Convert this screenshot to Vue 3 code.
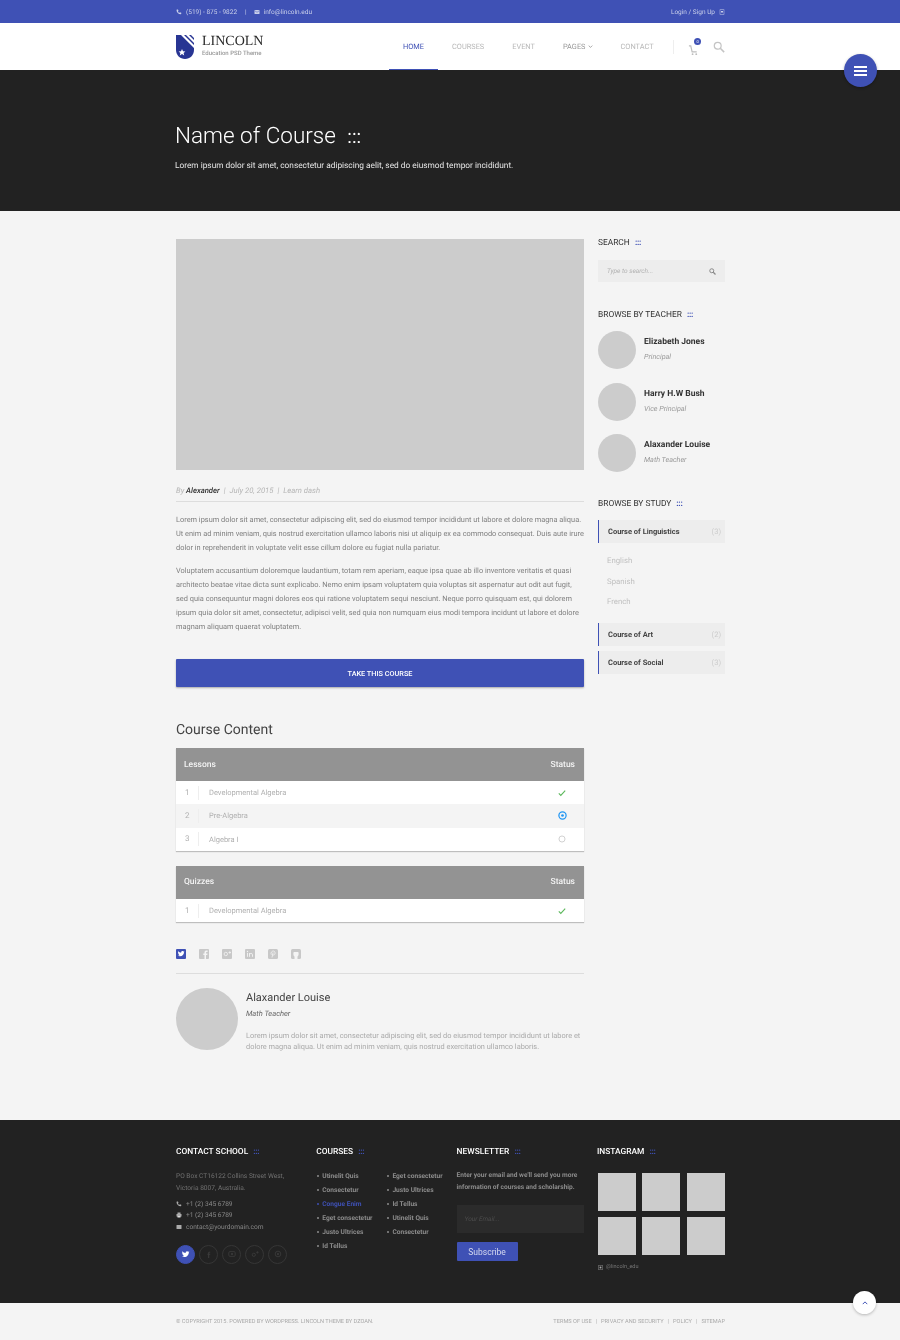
<script setup>
const teachers = [
  { name: 'Elizabeth Jones', role: 'Principal' },
  { name: 'Harry H.W Bush', role: 'Vice Principal' },
  { name: 'Alaxander Louise', role: 'Math Teacher' },
]
const linksA = ['Utinelit Quis', 'Consectetur', 'Congue Enim', 'Eget consectetur', 'Justo Ultrices', 'Id Tellus']
const linksB = ['Eget consectetur', 'Justo Ultrices', 'Id Tellus', 'Utinelit Quis', 'Consectetur']
const lessons = [
  { n: 1, title: 'Developmental Algebra', status: 'done' },
  { n: 2, title: 'Pre-Algebra', status: 'current' },
  { n: 3, title: 'Algebra I', status: 'open' },
]
const quizzes = [{ n: 1, title: 'Developmental Algebra', status: 'done' }]
const tables = [
  { head: 'Lessons', rows: lessons },
  { head: 'Quizzes', rows: quizzes },
]
const nav = ['HOME', 'COURSES', 'EVENT', 'PAGES', 'CONTACT']
</script>

<template>
  <div class="page">
    <div class="topbar">
      <div class="wrap topbar-in">
        <div class="top-left">
          <svg class="ti" viewBox="0 0 12 12"><path d="M2 1l2 0 1 3-1.300 1c.6 1.300 1.500 2.200 2.800 2.800L7.500 6.500l3 1 0 2.200c0 .5-.5 1-1 1C5 10.700 1 6.500 1 2c0-.5.5-1 1-1z" fill="#c9cfea"/></svg>
          <span>(519) - 875 - 9822</span>
          <span class="pipe">|</span>
          <svg class="ti" viewBox="0 0 12 12"><rect x="1" y="2" width="10" height="8" rx="1" fill="#c9cfea"/><path d="M1.500 3.500L6 6.500l4.500-3" stroke="#3f51b5" fill="none"/></svg>
          <span>info@lincoln.edu</span>
        </div>
        <div class="top-right">
          <span>Login / Sign Up</span>
          <svg class="ti" viewBox="0 0 12 12"><rect x="2" y="1.500" width="8" height="9" fill="none" stroke="#c9cfea"/><rect x="4" y="4" width="4" height="3" fill="#c9cfea"/></svg>
        </div>
      </div>
    </div>

    <header class="header">
      <div class="wrap header-in">
        <div class="logo">
          <svg class="shield" viewBox="0 0 18 24">
            <path d="M0 0h18v15c0 5-4 9-9 9s-9-4-9-9z" fill="#283593"/>
            <path d="M5 0h3l10 10v3zM10 0h3l5 5v3zM15 0h3v3z" fill="#fff"/>
            <path d="M6 14l1 2.300 2.400.2-1.800 1.500.6 2.400L6 19l-2.200 1.400.6-2.400-1.800-1.500 2.400-.2z" fill="#fff"/>
          </svg>
          <div>
            <div class="logo-name">LINCOLN</div>
            <div class="logo-sub">Education PSD Theme</div>
          </div>
        </div>
        <nav class="nav">
          <a v-for="n in nav" :key="n" :class="{ active: n === 'HOME', pages: n === 'PAGES' }">
            {{ n }}
            <svg v-if="n === 'PAGES'" class="caret" viewBox="0 0 8 5"><path d="M1 1l3 3 3-3" fill="none" stroke="#888" stroke-width="1.200"/></svg>
          </a>
        </nav>
        <div class="tools">
          <span class="cart">
            <svg viewBox="0 0 12 12" width="11" height="11"><path d="M1 1h2l1.500 6.500h5" fill="none" stroke="#bdbdbd" stroke-width="1.300"/><circle cx="5" cy="10" r="1" fill="#bdbdbd"/><circle cx="9" cy="10" r="1" fill="#bdbdbd"/></svg>
            <i class="badge">0</i>
          </span>
          <svg class="mag" viewBox="0 0 14 14"><circle cx="5.500" cy="5.500" r="4" fill="none" stroke="#c4c4c4" stroke-width="1.400"/><path d="M8.500 8.500L13 13" stroke="#c4c4c4" stroke-width="1.800"/></svg>
        </div>
      </div>
      <button class="fab"><span></span><span></span><span></span></button>
    </header>

    <section class="hero">
      <div class="wrap">
        <h1>Name of Course <em class="dots big">:::</em></h1>
        <p>Lorem ipsum dolor sit amet, consectetur adipiscing aelit, sed do eiusmod tempor incididunt.</p>
      </div>
    </section>

    <div class="content wrap">
      <main class="main">
        <div class="video"></div>
        <div class="meta">
          <span>By <b>Alexander</b></span><i>|</i><span>July 20, 2015</span><i>|</i><span>Learn dash</span>
        </div>
        <p class="body">Lorem ipsum dolor sit amet, consectetur adipiscing elit, sed do eiusmod tempor incididunt ut labore et dolore magna aliqua. Ut enim ad minim veniam, quis nostrud exercitation ullamco laboris nisi ut aliquip ex ea commodo consequat. Duis aute irure dolor in reprehenderit in voluptate velit esse cillum dolore eu fugiat nulla pariatur.</p>
        <p class="body">Voluptatem accusantium doloremque laudantium, totam rem aperiam, eaque ipsa quae ab illo inventore veritatis et quasi architecto beatae vitae dicta sunt explicabo. Nemo enim ipsam voluptatem quia voluptas sit aspernatur aut odit aut fugit, sed quia consequuntur magni dolores eos qui ratione voluptatem sequi nesciunt. Neque porro quisquam est, qui dolorem ipsum quia dolor sit amet, consectetur, adipisci velit, sed quia non numquam eius modi tempora incidunt ut labore et dolore magnam aliquam quaerat voluptatem.</p>
        <button class="take">TAKE THIS COURSE</button>
        <h2 class="cc">Course Content</h2>

        <div v-for="t in tables" :key="t.head" class="tbl">
          <div class="tbl-head"><span>{{ t.head }}</span><span>Status</span></div>
          <div v-for="r in t.rows" :key="r.n" class="tbl-row">
            <span class="num">{{ r.n }}</span>
            <span class="ttl">{{ r.title }}</span>
            <span class="st">
              <svg v-if="r.status === 'done'" viewBox="0 0 10 10" width="8" height="8"><path d="M1 5.500l2.500 2.500L9 2" fill="none" stroke="#5cb85c" stroke-width="1.400"/></svg>
              <svg v-else-if="r.status === 'current'" viewBox="0 0 10 10" width="9" height="9"><circle cx="5" cy="5" r="4" fill="none" stroke="#2196f3" stroke-width="1.400"/><circle cx="5" cy="5" r="1.500" fill="#2196f3"/></svg>
              <svg v-else viewBox="0 0 10 10" width="8" height="8"><circle cx="5" cy="5" r="3.800" fill="none" stroke="#cfcfcf" stroke-width="1.200"/></svg>
            </span>
          </div>
        </div>

        <div class="share">
          <span class="sq on">
            <svg viewBox="0 0 10 10" width="8" height="8"><path d="M9.500 2.200c-.3.200-.7.300-1 .3.400-.2.600-.5.800-1-.4.200-.7.400-1.100.400C7.800 1.500 7.300 1.300 6.800 1.300c-1.100 0-1.900 1-1.600 2.100C3.700 3.300 2.400 2.600 1.500 1.500c-.5.800-.2 1.800.5 2.200-.3 0-.5-.1-.7-.2 0 .8.500 1.500 1.300 1.700-.2 0-.5.100-.7 0 .2.700.9 1.100 1.500 1.200-.7.500-1.500.7-2.400.6C1.800 7.500 2.700 7.800 3.600 7.800c3.300 0 5.200-2.800 5.100-5.100.3-.1.600-.3.800-.5z" fill="#fff"/></svg>
          </span>
          <span class="sq"><svg viewBox="0 0 10 10" width="10" height="10"><rect width="10" height="10" rx="1" fill="#c8c8c8"/><path d="M7 10V6h1.300l.2-1.500H7V3.600c0-.4.200-.7.700-.7h.9V1.500H7.300C6.100 1.500 5.500 2.300 5.500 3.400v1.100H4.300V6h1.200v4z" fill="#f4f4f4"/></svg></span>
          <span class="sq"><svg viewBox="0 0 10 10" width="10" height="10"><rect width="10" height="10" rx="1" fill="#c8c8c8"/><circle cx="3.800" cy="5" r="1.700" fill="none" stroke="#f4f4f4" stroke-width=".8"/><path d="M6.500 3.500h2.500M7.750 2.250v2.500" stroke="#f4f4f4" stroke-width=".8"/></svg></span>
          <span class="sq"><svg viewBox="0 0 10 10" width="10" height="10"><rect width="10" height="10" rx="1" fill="#c8c8c8"/><path d="M2.500 4v3.800M4.500 7.800V4M4.500 5.500c.5-1.500 3-1.500 3 .3v2" stroke="#f4f4f4" fill="none" stroke-width=".9"/><circle cx="2.500" cy="2.500" r=".7" fill="#f4f4f4"/></svg></span>
          <span class="sq"><svg viewBox="0 0 10 10" width="10" height="10"><rect width="10" height="10" rx="1.500" fill="#c8c8c8"/><path d="M4 8.500l1.100-5M3.300 5.700C2.300 3.700 3.900 2 5.300 2c2.200 0 2.400 3.800.3 4-.5 0-1-.3-1-.6" stroke="#f4f4f4" fill="none" stroke-width=".8"/></svg></span>
          <span class="sq"><svg viewBox="0 0 10 10" width="10" height="10"><rect width="10" height="10" rx="1.500" fill="#c8c8c8"/><path d="M3.500 10V7.500C2.300 7 2 4 2.800 3h4.400C8 4 7.700 7 6.500 7.500V10" fill="#f4f4f4"/></svg></span>
        </div>

        <div class="author">
          <div class="avatar-lg"></div>
          <div class="a-info">
            <div class="a-name">Alaxander Louise</div>
            <div class="a-role">Math Teacher</div>
            <p class="a-text">Lorem ipsum dolor sit amet, consectetur adipiscing elit, sed do eiusmod tempor incididunt ut labore et dolore magna aliqua. Ut enim ad minim veniam, quis nostrud exercitation ullamco laboris.</p>
          </div>
        </div>
      </main>

      <aside class="side">
        <h4 class="sh">SEARCH <em class="dots">:::</em></h4>
        <div class="search">
          <span>Type to search...</span>
          <svg viewBox="0 0 14 14" width="7" height="7"><circle cx="5.500" cy="5.500" r="4" fill="none" stroke="#8a8a8a" stroke-width="2"/><path d="M8.500 8.500L13 13" stroke="#8a8a8a" stroke-width="2.400"/></svg>
        </div>

        <h4 class="sh teach">BROWSE BY TEACHER <em class="dots">:::</em></h4>
        <div v-for="t in teachers" :key="t.name" class="teacher">
          <div class="avatar"></div>
          <div class="t-info">
            <div class="t-name">{{ t.name }}</div>
            <div class="t-role">{{ t.role }}</div>
          </div>
        </div>

        <h4 class="sh study">BROWSE BY STUDY <em class="dots">:::</em></h4>
        <div class="cat"><span>Course of Linguistics</span><i>(3)</i></div>
        <ul class="subs">
          <li>English</li>
          <li>Spanish</li>
          <li>French</li>
        </ul>
        <div class="cat"><span>Course of Art</span><i>(2)</i></div>
        <div class="cat"><span>Course of Social</span><i>(3)</i></div>
      </aside>
    </div>

    <footer class="footer">
      <div class="wrap foot-grid">
        <div>
          <h4 class="fh">CONTACT SCHOOL <em class="dots">:::</em></h4>
          <p class="addr">PO Box CT16122 Collins Street West, Victoria 8007, Australia.</p>
          <div class="cline"><svg viewBox="0 0 12 12" width="6" height="6"><path d="M2 1l2 0 1 3-1.300 1c.6 1.300 1.500 2.200 2.800 2.800L7.500 6.500l3 1 0 2.200c0 .5-.5 1-1 1C5 10.700 1 6.500 1 2c0-.5.5-1 1-1z" fill="#aaa"/></svg>+1 (2) 345 6789</div>
          <div class="cline"><svg viewBox="0 0 12 12" width="6" height="6"><rect x="3" y="1" width="6" height="3" fill="#aaa"/><rect x="1" y="4" width="10" height="5" fill="#aaa"/><rect x="3" y="8" width="6" height="3" fill="#ddd"/></svg>+1 (2) 345 6789</div>
          <div class="cline"><svg viewBox="0 0 12 12" width="6" height="6"><rect x="1" y="2" width="10" height="8" rx="1" fill="#aaa"/></svg>contact@yourdomain.com</div>
          <div class="socials">
            <span class="soc on"><svg viewBox="0 0 10 10" width="9" height="9"><path d="M9.500 2.200c-.3.200-.7.300-1 .3.400-.2.600-.5.800-1-.4.200-.7.400-1.100.400C7.800 1.500 7.300 1.300 6.800 1.300c-1.100 0-1.900 1-1.600 2.100C3.700 3.300 2.400 2.600 1.500 1.500c-.5.800-.2 1.800.5 2.200-.3 0-.5-.1-.7-.2 0 .8.500 1.500 1.300 1.700-.2 0-.5.100-.7 0 .2.700.9 1.100 1.500 1.200-.7.500-1.500.7-2.400.6C1.800 7.500 2.700 7.800 3.600 7.800c3.300 0 5.200-2.800 5.100-5.100.3-.1.600-.3.800-.5z" fill="#fff"/></svg></span>
            <span class="soc"><svg viewBox="0 0 10 10" width="7" height="7"><path d="M6 10V5.500h1.300l.2-1.500H6V3c0-.4.200-.7.700-.7h.9V1H6.300C5.100 1 4.500 1.800 4.500 2.900V4H3.500v1.500h1V10z" fill="#3c3c3c"/></svg></span>
            <span class="soc"><svg viewBox="0 0 10 10" width="8" height="8"><rect x="1" y="2" width="8" height="6" rx="1.500" fill="none" stroke="#3c3c3c"/><circle cx="5" cy="5" r="1.400" fill="#3c3c3c"/></svg></span>
            <span class="soc"><svg viewBox="0 0 10 10" width="8" height="8"><circle cx="3.500" cy="6" r="2" fill="none" stroke="#3c3c3c"/><path d="M6.500 3h3M8 1.500v3" stroke="#3c3c3c"/></svg></span>
            <span class="soc"><svg viewBox="0 0 10 10" width="8" height="8"><circle cx="5" cy="5" r="3.500" fill="none" stroke="#3c3c3c"/><circle cx="5" cy="5" r="1.300" fill="#3c3c3c"/></svg></span>
          </div>
        </div>
        <div>
          <h4 class="fh">COURSES <em class="dots">:::</em></h4>
          <div class="f-links">
            <ul>
              <li v-for="l in linksA" :key="l" :class="{ hot: l === 'Congue Enim' }">{{ l }}</li>
            </ul>
            <ul>
              <li v-for="l in linksB" :key="l">{{ l }}</li>
            </ul>
          </div>
        </div>
        <div>
          <h4 class="fh">NEWSLETTER <em class="dots">:::</em></h4>
          <p class="news">Enter your email and we'll send you more information of courses and scholarship.</p>
          <div class="email">Your Email...</div>
          <button class="sub">Subscribe</button>
        </div>
        <div>
          <h4 class="fh">INSTAGRAM <em class="dots">:::</em></h4>
          <div class="insta">
            <div v-for="i in 6" :key="i"></div>
          </div>
          <div class="handle">
            <svg viewBox="0 0 10 10" width="5" height="5"><rect x=".5" y=".5" width="9" height="9" rx="1.500" fill="none" stroke="#aaa"/><circle cx="5" cy="5" r="2" fill="#aaa"/></svg>
            @lincoln_edu
          </div>
        </div>
      </div>
    </footer>

    <div class="bottom">
      <div class="wrap bottom-in">
        <span>© COPYRIGHT 2015. POWERED BY WORDPRESS. LINCOLN THEME BY DZOAN.</span>
        <span class="b-links">TERMS OF USE<i>|</i>PRIVACY AND SECURITY<i>|</i>POLICY<i>|</i>SITEMAP</span>
      </div>
      <button class="up">
        <svg viewBox="0 0 8 5" width="6" height="4"><path d="M1 4l3-3 3 3" fill="none" stroke="#3f51b5" stroke-width="1.300"/></svg>
      </button>
    </div>
  </div>
</template>

<style scoped>
.page {
  width: 900px;
  height: 1340px;
  overflow: hidden;
  background: #f4f4f4;
  font-family: Roboto, "Liberation Sans", sans-serif;
  color: #888;
  text-rendering: geometricPrecision;
  will-change: transform;
}
.wrap {
  width: 549px;
  margin-left: 176px;
}
.topbar {
  height: 23px;
  background: #3f51b5;
  color: #c9cfea;
  font-size: 6.500px;
}
.topbar-in {
  height: 23px;
  display: flex;
  align-items: center;
  justify-content: space-between;
}
.top-left,
.top-right {
  display: flex;
  align-items: center;
}
.ti {
  width: 6px;
  height: 6px;
}
.top-left .ti {
  margin-right: 4px;
}
.top-right .ti {
  margin-left: 4px;
}
.pipe {
  margin: 0 7px 0 8px;
}
.header {
  position: relative;
  height: 47px;
  background: #fff;
}
.header-in {
  height: 47px;
  display: flex;
  align-items: center;
}
.logo {
  display: flex;
  align-items: center;
  gap: 8px;
  width: 213px;
}
.shield {
  width: 18px;
  height: 24px;
}
.logo-name {
  font-family: "Liberation Serif", serif;
  font-size: 14px;
  line-height: 14px;
  color: #2a2a2a;
}
.logo-sub {
  font-size: 6px;
  font-weight: 500;
  line-height: 9px;
  color: #999;
}
.nav {
  display: flex;
  height: 47px;
  width: 284px;
}
.nav a {
  display: flex;
  align-items: center;
  padding: 0 14px;
  font-size: 7.400px;
  color: #b8b8b8;
  position: relative;
}
.nav a.active {
  color: #3f51b5;
}
.nav a.active::after {
  content: '';
  position: absolute;
  left: 0;
  right: 0;
  bottom: 0;
  height: 1px;
  background: #3f51b5;
}
.nav a.pages {
  color: #999;
}
.caret {
  width: 5px;
  height: 3px;
  margin-left: 2px;
}
.tools {
  display: flex;
  align-items: center;
  gap: 14px;
  height: 14px;
  padding-left: 14px;
  border-left: 1px solid #eee;
}
.cart {
  position: relative;
  display: block;
  height: 11px;
}
.badge {
  position: absolute;
  top: -3px;
  left: 6px;
  width: 7px;
  height: 7px;
  border-radius: 50%;
  background: #3f51b5;
  color: #fff;
  font-size: 4px;
  line-height: 7px;
  text-align: center;
  font-style: normal;
}
.mag {
  width: 12px;
  height: 12px;
}
.fab {
  position: absolute;
  right: 23px;
  top: 31px;
  width: 33px;
  height: 33px;
  border: 0;
  border-radius: 50%;
  background: #3f51b5;
  box-shadow: 0 1px 3px rgba(0, 0, 0, .3);
  display: flex;
  flex-direction: column;
  align-items: center;
  justify-content: center;
  gap: 2px;
  z-index: 3;
}
.fab span {
  width: 13px;
  height: 2px;
  background: #fff;
}
.hero {
  height: 141px;
  background: #222;
  color: #fff;
  padding-top: 52px;
  box-sizing: border-box;
}
.hero h1 {
  margin: 0 0 0 -1px;
  font-size: 22.500px;
  font-weight: 300;
  line-height: 28px;
}
.hero p {
  margin: 9px 0 0 -1px;
  font-size: 8.300px;
  line-height: 12px;
  color: #e6e6e6;
}
.dots {
  font-style: normal;
  font-weight: 700;
  color: #3f51b5;
  letter-spacing: -.3px;
  margin-left: 3px;
}
.dots.big {
  color: #fff;
  font-size: 19px;
  font-weight: 400;
  margin-left: 6px;
  letter-spacing: 0;
}
.content {
  display: flex;
  height: 909px;
  gap: 14px;
}
.main {
  width: 408px;
  padding-top: 28px;
}
.video {
  height: 231px;
  background: #ccc;
}
.meta {
  margin-top: 15px;
  padding-bottom: 5px;
  height: 11px;
  border-bottom: 1px solid #ddd;
  font-size: 7.700px;
  font-style: italic;
  line-height: 11px;
  color: #b5b5b5;
}
.meta b {
  color: #333;
  font-weight: 500;
}
.meta i {
  margin: 0 4px;
}
.body {
  margin: 11px 0 0;
  font-size: 7.400px;
  line-height: 14px;
  color: #808080;
}
.body + .body {
  margin-top: 9px;
}
.take {
  display: block;
  width: 408px;
  height: 28px;
  margin-top: 25px;
  padding-top: 1px;
  border: 0;
  border-radius: 1px;
  background: #3f51b5;
  box-shadow: 0 1px 2px rgba(0, 0, 0, .3);
  color: #fff;
  font: 500 7.300px Roboto, sans-serif;
}
.cc {
  margin: 33px 0 0;
  font-size: 14px;
  font-weight: 400;
  line-height: 20px;
  color: #444;
}
.tbl {
  margin-top: 8px;
  background: #fff;
  box-shadow: 0 1px 1px rgba(0, 0, 0, .22);
}
.tbl + .tbl {
  margin-top: 15px;
}
.tbl-head {
  height: 33px;
  background: #939393;
  color: #f4f4f4;
  font-size: 8.500px;
  font-weight: 500;
  display: flex;
  align-items: center;
  justify-content: space-between;
  padding: 0 9px 0 8px;
}
.tbl-row {
  height: 23.300px;
  display: flex;
  align-items: center;
  font-size: 7.500px;
  color: #b0b0b0;
}
.tbl-row:nth-child(3) {
  background: #f4f4f4;
}
.num {
  width: 23px;
  height: 14px;
  line-height: 14px;
  padding-left: 9px;
  box-sizing: border-box;
  border-right: 1px solid #eee;
  font-size: 8px;
}
.ttl {
  flex: 1;
  padding-left: 10px;
}
.st {
  width: 44px;
  display: flex;
  justify-content: center;
}
.share {
  display: flex;
  gap: 13px;
  align-items: flex-start;
  height: 52px;
  padding-top: 27px;
  box-sizing: border-box;
  border-bottom: 1px solid #ddd;
}
.sq {
  width: 10px;
  height: 10px;
  display: flex;
  align-items: center;
  justify-content: center;
}
.sq.on {
  background: #3f51b5;
  border-radius: 1px;
}
.author {
  display: flex;
  gap: 8px;
  margin-top: 14px;
}
.avatar-lg {
  flex: none;
  width: 62px;
  height: 62px;
  border-radius: 50%;
  background: #ccc;
}
.a-info {
  padding-top: 1px;
}
.a-name {
  font-size: 11px;
  line-height: 18px;
  color: #444;
}
.a-role {
  margin-top: 1px;
  font-size: 7.500px;
  font-style: italic;
  line-height: 12px;
  color: #666;
}
.a-text {
  margin: 11px 0 0;
  font-size: 7.400px;
  line-height: 10.500px;
  color: #aaa;
}
.side {
  width: 127px;
  padding-top: 27px;
}
.sh {
  margin: 0;
  font-size: 8.400px;
  font-weight: 400;
  line-height: 11px;
  color: #333;
}
.search {
  margin-top: 11px;
  height: 22px;
  background: #ededed;
  padding: 0 9px 0 9px;
  display: flex;
  align-items: center;
  justify-content: space-between;
  font-size: 6.500px;
  font-style: italic;
  color: #b0b0b0;
}
.teach {
  margin-top: 28px;
  margin-bottom: 10px;
}
.teacher {
  display: flex;
  gap: 8px;
  height: 38px;
  margin-bottom: 13.500px;
}
.avatar {
  flex: none;
  width: 38px;
  height: 38px;
  border-radius: 50%;
  background: #ccc;
}
.t-name {
  font-size: 8.500px;
  font-weight: 700;
  line-height: 11px;
  color: #333;
}
.t-info {
  padding-top: 6px;
}
.t-role {
  margin-top: 3px;
  font-size: 7.200px;
  font-style: italic;
  line-height: 11px;
  color: #999;
}
.study {
  margin-top: 27px;
}
.cat {
  height: 23px;
  margin-top: 5px;
  background: #ededed;
  border-left: 1px solid #3f51b5;
  padding: 0 4px 0 9px;
  display: flex;
  align-items: center;
  justify-content: space-between;
  font-size: 7.500px;
  font-weight: 700;
  color: #444;
}
.study + .cat {
  margin-top: 10px;
}
.cat i {
  font-style: normal;
  font-weight: 400;
  color: #ccc;
}
.subs {
  list-style: none;
  margin: 0;
  padding: 8px 0 5px 9px;
  font-size: 7.800px;
  color: #c0c0c0;
}
.subs li {
  line-height: 20.500px;
}
.footer {
  height: 183px;
  background: #222;
  padding-top: 27px;
  box-sizing: border-box;
}
.foot-grid {
  display: grid;
  grid-template-columns: 140.300px 140.300px 140.300px 128px;
}
.fh {
  margin: 0;
  font-size: 8.400px;
  font-weight: 500;
  line-height: 11px;
  color: #fff;
}
.addr {
  width: 116px;
  margin: 13px 0 0;
  font-size: 6.600px;
  line-height: 11.500px;
  color: #707070;
}
.cline {
  display: flex;
  align-items: center;
  gap: 4px;
  height: 11.500px;
  font-size: 6.600px;
  color: #888;
}
.addr + .cline {
  margin-top: 4px;
}
.socials {
  display: flex;
  gap: 4px;
  margin-top: 12px;
}
.soc {
  width: 19px;
  height: 19px;
  border-radius: 50%;
  border: 1px solid #363636;
  box-sizing: border-box;
  display: flex;
  align-items: center;
  justify-content: center;
}
.soc.on {
  background: #3f51b5;
  border-color: #3f51b5;
}
.f-links {
  display: flex;
  margin-top: 11px;
}
.f-links ul {
  list-style: none;
  margin: 0;
  padding: 0;
  width: 70.500px;
}
.f-links li {
  height: 14px;
  line-height: 14px;
  font-size: 6.600px;
  font-weight: 700;
  color: #8c8c8c;
  padding-left: 6px;
  position: relative;
  white-space: nowrap;
}
.f-links li::before {
  content: '';
  position: absolute;
  left: 1px;
  top: 6px;
  width: 2px;
  height: 2px;
  border-radius: 50%;
  background: #8c8c8c;
}
.f-links li.hot {
  color: #3f51b5;
}
.f-links li.hot::before {
  background: #3f51b5;
}
.news {
  margin: 12px 0 0;
  font-size: 6.600px;
  font-weight: 700;
  line-height: 11.500px;
  color: #8c8c8c;
}
.email {
  width: 127px;
  height: 28px;
  margin-top: 12px;
  padding-left: 8px;
  box-sizing: border-box;
  background: #2b2b2b;
  font-size: 6.500px;
  font-style: italic;
  line-height: 28px;
  color: #4d4d4d;
}
.sub {
  display: block;
  width: 61px;
  height: 19px;
  margin-top: 9px;
  border: 0;
  border-radius: 1px;
  background: #3f51b5;
  color: #d5d9f0;
  font: 400 8.500px Roboto, sans-serif;
}
.insta {
  display: grid;
  grid-template-columns: repeat(3, 38px);
  column-gap: 6.500px;
  row-gap: 6px;
  margin: 15px 0 0 1px;
}
.insta div {
  height: 38px;
  background: #ccc;
}
.handle {
  display: flex;
  align-items: center;
  gap: 3px;
  margin: 9px 0 0 1px;
  font-size: 5.500px;
  color: #777;
}
.bottom {
  position: relative;
  height: 37px;
}
.bottom-in {
  display: flex;
  justify-content: space-between;
  padding-top: 15px;
  font-size: 5.650px;
  line-height: 8px;
  color: #aaa;
}
.b-links i {
  font-style: normal;
  margin: 0 4px;
}
.up {
  position: absolute;
  right: 24px;
  top: -12px;
  width: 23px;
  height: 23px;
  padding: 0;
  border: 0;
  border-radius: 50%;
  background: #fff;
  box-shadow: 0 1px 3px rgba(0, 0, 0, .25);
  display: flex;
  align-items: center;
  justify-content: center;
}
</style>
